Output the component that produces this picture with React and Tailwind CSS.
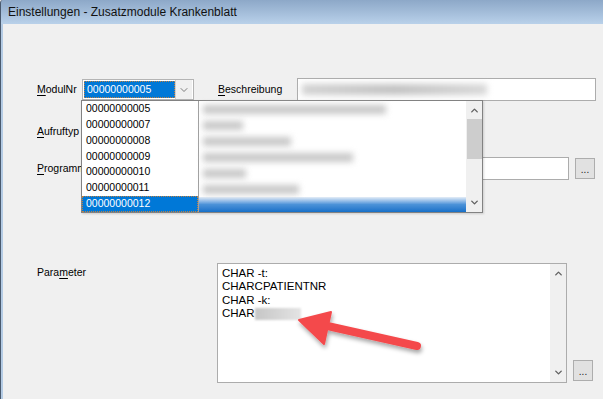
import { ChevronDown, ChevronUp } from 'lucide-react'

const font = { fontFamily: '"Liberation Sans", Arial, sans-serif' }

const ids = ['00000000005', '00000000007', '00000000008', '00000000009', '00000000010', '00000000011', '00000000012']
const blurWidths = [183, 40, 88, 150, 43, 96]

function Ul({ children }) {
  return <span className="underline underline-offset-2">{children}</span>
}

function DotsButton() {
  return (
    <button className="flex h-[21px] w-[20px] items-end justify-center border border-[#adadad] bg-[#e1e1e1] pb-[3px] text-[10px] leading-none text-[#222]">
      ...
    </button>
  )
}

function ScrollBar({ thumb }) {
  return (
    <div className="flex w-[16px] shrink-0 flex-col items-center bg-[#f0f0f0]">
      <ChevronUp size={11} strokeWidth={3} className="mt-[4px] text-[#606060]" />
      {thumb ? <div className="mt-[3px] h-[40px] w-[15px] bg-[#cdcdcd]" /> : null}
      <div className="flex-1" />
      <ChevronDown size={11} strokeWidth={3} className="mb-[4px] text-[#606060]" />
    </div>
  )
}

export default function App() {
  return (
    <div className="flex h-[399px] w-[603px] flex-col overflow-hidden bg-[#f0f0f0] text-[10.5px] text-black" style={font}>
      {/* Title bar */}
      <div className="flex h-[24px] shrink-0 items-center rounded-tl-[3px] border-l border-[#4a5a6e] bg-gradient-to-b from-[#8da8c8] to-[#b9d1ea] pl-[7px] text-[12px] text-[#111]">
        Einstellungen - Zusatzmodule Krankenblatt
      </div>

      <div className="relative flex flex-1 border-l border-[#4a5a6e]">
        <div className="w-[2px] shrink-0 bg-[#b4cbe4]" />

        <div className="flex flex-1 flex-col pl-[34px]">
          {/* ModulNr row */}
          <div className="mt-[54px] flex h-[23px] items-center">
            <div className="w-[45px]"><Ul>M</Ul>odulNr</div>
            <div className="flex h-[21px] w-[112px] items-center border border-[#b4b4b4] bg-white p-[1px]">
              <div className="flex h-[17px] w-[91px] items-center border border-dotted border-[#c08040] bg-[#0078d7] pl-[2px] text-white">
                00000000005
              </div>
              <div className="flex h-[19px] flex-1 items-center justify-center border-l border-[#d0d0d0] bg-[#f0f0f0]">
                <ChevronDown size={12} strokeWidth={1.5} className="text-[#555]" />
              </div>
            </div>
            <div className="ml-[24px] w-[79px]"><Ul>B</Ul>eschreibung</div>
            <div className="flex h-[23px] w-[299px] items-center border border-[#acacac] bg-white px-[4px]">
              <div className="h-[11px] w-[185px] bg-gradient-to-r from-[#d2d2d2] via-[#c2c2c2] to-[#d8d8d8] blur-[3px]" />
            </div>
          </div>

          {/* Aufruftyp row */}
          <div className="mt-[19px] flex h-[23px] items-center">
            <div className="w-[45px]"><Ul>A</Ul>ufruftyp</div>
          </div>

          {/* Programm row */}
          <div className="mt-[14px] flex h-[23px] items-center">
            <div className="w-[45px] whitespace-nowrap"><Ul>P</Ul>rogramm</div>
            <div className="h-[23px] w-[487px] border border-[#acacac] bg-white" />
            <div className="ml-[6px]"><DotsButton /></div>
          </div>

          {/* Parameter row */}
          <div className="mt-[83px] flex">
            <div className="mt-[2px] w-[180px]">Para<Ul>m</Ul>eter</div>
            <div className="flex h-[120px] w-[350px] border border-[#acacac] bg-white">
              <div className="flex-1 pl-[4px] pt-[3px] text-[11.5px] leading-[13.3px]">
                <div>CHAR -t:</div>
                <div>CHARCPATIENTNR</div>
                <div>CHAR -k:</div>
                <div className="flex items-center">
                  CHAR
                  <div className="h-[12px] w-[46px] bg-gradient-to-r from-[#c6c6c6] to-[#e4e4e4] blur-[1px]" />
                </div>
              </div>
              <ScrollBar />
            </div>
            <div className="ml-[6px] mt-[97px]"><DotsButton /></div>
          </div>
        </div>

        {/* Open dropdown list */}
        <div className="absolute left-[80px] top-[76px] flex h-[113px] w-[402px] border border-[#828282] bg-white shadow-[1px_1px_2px_rgba(0,0,0,0.15)]">
          <div className="flex w-[117px] flex-col border-r border-[#a0a0a0]">
            {ids.map((id, i) => (
              <div
                key={id}
                className={
                  i === ids.length - 1
                    ? 'flex h-[16px] items-center border border-dotted border-[#c08040] bg-[#0078d7] pl-[3px] text-white'
                    : 'flex h-[16px] items-center pl-[4px]'
                }
              >
                {id}
              </div>
            ))}
          </div>
          <div className="flex flex-1 flex-col">
            {blurWidths.map((w, i) => (
              <div key={i} className="flex h-[16px] items-center pl-[4px]">
                <div className="h-[9px] bg-[#c8c8c8] blur-[3px]" style={{ width: w }} />
              </div>
            ))}
            <div className="h-[15px] bg-gradient-to-b from-[#e4edf7] via-[#4b92d8] to-[#1570c8]" />
          </div>
          <ScrollBar thumb />
        </div>

        {/* Red annotation arrow */}
        <svg className="pointer-events-none absolute left-[290px] top-[270px]" width="140" height="70" viewBox="290 270 140 70">
          <defs>
            <filter id="sh" x="-20%" y="-40%" width="140%" height="180%">
              <feDropShadow dx="1" dy="3" stdDeviation="2" floodColor="#000" floodOpacity="0.35" />
            </filter>
          </defs>
          <g filter="url(#sh)" fill="#f44a4c" stroke="#f44a4c">
            <line x1="322" y1="301" x2="416" y2="322" strokeWidth="8" strokeLinecap="round" />
            <polygon points="298,296 330,288 323,320" strokeWidth="2" strokeLinejoin="round" />
          </g>
        </svg>
      </div>
    </div>
  )
}
